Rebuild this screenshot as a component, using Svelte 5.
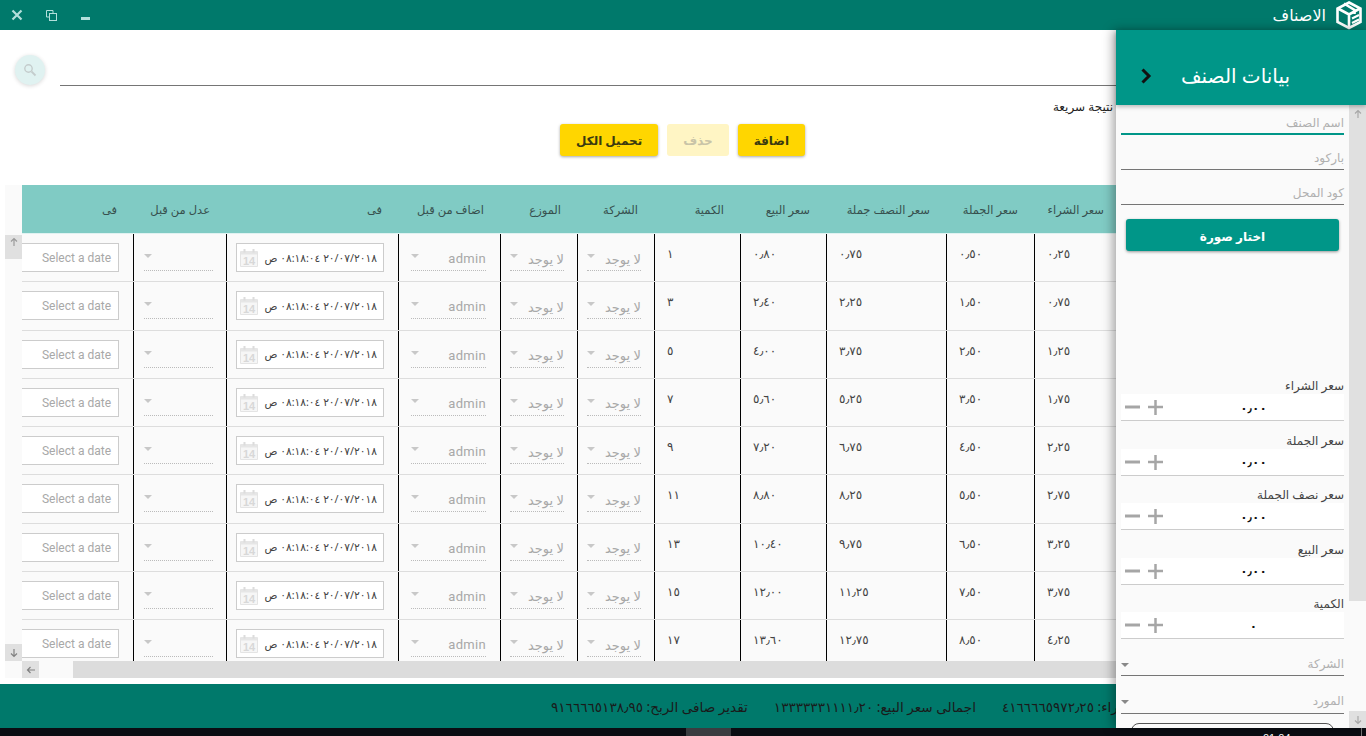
<script>
  const ar = (s) => String(s).replace(/\d/g, (d) => '٠١٢٣٤٥٦٧٨٩'[d]).replace('.', '٫');
  const headers = ['سعر الشراء', 'سعر الجملة', 'سعر النصف جملة', 'سعر البيع', 'الكمية', 'الشركة', 'الموزع', 'اضاف من قبل', 'فى', 'عدل من قبل', 'فى'];
  const rows = [1, 3, 5, 7, 9, 11, 13, 15, 17].map((q) => ({
    buy: ar((q * 0.25).toFixed(2)),
    whole: ar((q * 0.5).toFixed(2)),
    half: ar((q * 0.75).toFixed(2)),
    sell: ar((q * 0.8).toFixed(2)),
    qty: ar(q)
  }));
  const stamp = '٢٠/٠٧/٢٠١٨ ٠٨:١٨:٠٤ ص';
  const prices = ['سعر الشراء', 'سعر الجملة', 'سعر نصف الجملة', 'سعر البيع'];
</script>

<div class="app" dir="ltr">
  <header class="titlebar">
    <div class="winbtns">
      <svg class="w-close" width="12" height="12" viewBox="0 0 12 12"><path d="M1.5 1.5l9 9M10.5 1.5l-9 9" stroke="#b2dfdb" stroke-width="2.2" fill="none"/></svg>
      <svg class="w-restore" width="11" height="11" viewBox="0 0 11 11"><path d="M.5.5h6.5v2.5M.5.5v6.5h2.5" stroke="#b2dfdb" fill="none"/><rect x="3.5" y="3.5" width="7" height="7" stroke="#b2dfdb" fill="none"/></svg>
      <span class="w-min"></span>
    </div>
    <div class="brand" dir="rtl">
      <svg width="30" height="30" viewBox="0 0 30 30"><path d="M15 2.5L26.5 8.500V22L15 28L3.500 22V8.500Z" fill="none" stroke="#fff" stroke-width="2.600"/><path d="M4 8.500L15 14.500L26 8.500M15 14.500V27" fill="none" stroke="#fff" stroke-width="2.600"/><path d="M10 3.500L20.500 10L20.500 14" fill="none" stroke="#fff" stroke-width="2.600"/><path d="M18 18.500L25 15M18 23L25 19.500" stroke="#fff" stroke-width="2" fill="none"/></svg>
      <span>الاصناف</span>
    </div>
  </header>

  <div class="body">
    <main class="content">
      <section class="search">
        <div class="searchbtn">
          <svg width="14" height="14" viewBox="0 0 14 14"><circle cx="5.500" cy="5.500" r="3.700" fill="none" stroke="#c4cccc" stroke-width="1.400"/><path d="M8.500 8.500l4 4" stroke="#c4cccc" stroke-width="1.800"/></svg>
        </div>
        <div class="searchline"></div>
      </section>
      <div class="quick" dir="rtl">نتيجة سريعة</div>
      <div class="actions" dir="rtl">
        <button class="yl">اضافة</button>
        <button class="yl off">حذف</button>
        <button class="yl">تحميل الكل</button>
      </div>

      <section class="grid">
        <div class="gutter">
          <div class="gtop"></div>
          <div class="arrow up"><svg width="10" height="10" viewBox="0 0 10 10"><path d="M5 9V2M2 4.500L5 1.500l3 3" stroke="#9a9a9a" stroke-width="1.200" fill="none"/></svg></div>
          <div class="gmid"></div>
          <div class="arrow dn"><svg width="10" height="10" viewBox="0 0 10 10"><path d="M5 1v7M2 5.500L5 8.500l3-3" stroke="#808080" stroke-width="1.200" fill="none"/></svg></div>
          <div class="gcorner"></div>
        </div>
        <div class="gridmain">
          <div class="viewport" dir="rtl">
            <div class="row head">
              {#each headers as h}<div class="hc">{h}</div>{/each}
            </div>
            {#each rows as r}
              <div class="row">
                <div class="c num">{r.buy}</div>
                <div class="c num">{r.whole}</div>
                <div class="c num">{r.half}</div>
                <div class="c num">{r.sell}</div>
                <div class="c num">{r.qty}</div>
                <div class="c"><div class="sel s-co"><span>لا يوجد</span><i></i></div></div>
                <div class="c"><div class="sel s-di"><span>لا يوجد</span><i></i></div></div>
                <div class="c"><div class="sel s-ad"><span class="latin">admin</span><i></i></div></div>
                <div class="c"><div class="dt">
                  <span>{stamp}</span>
                  <svg width="18" height="19" viewBox="0 0 18 19"><path d="M.500 3.500h17v15h-17z" fill="#f6f6f6" stroke="#e4e4e4"/><path d="M1 3h16v3.500H1z" fill="#e6e6e6"/><path d="M4.500 1v3.500M13.500 1v3.500" stroke="#dcdcdc" stroke-width="2"/><text x="9" y="16.500" text-anchor="middle" class="cal">14</text></svg>
                </div></div>
                <div class="c"><div class="sel s-ed"><span></span><i></i></div></div>
                <div class="c"><div class="dt2">Select a date</div></div>
              </div>
            {/each}
          </div>
          <div class="hbar">
            <div class="arrow left"><svg width="10" height="10" viewBox="0 0 10 10"><path d="M9 5H2M4.500 2L1.500 5l3 3" stroke="#808080" stroke-width="1.200" fill="none"/></svg></div>
            <div class="hgap"></div>
            <div class="hthumb"></div>
          </div>
        </div>
      </section>

      <footer class="totals" dir="rtl">
        <span>اجمالى سعر الشراء: ٤١٦٦٦٦٥٩٧٢٫٢٥</span>
        <span>اجمالى سعر البيع: ١٣٣٣٣٣٣١١١١٫٢٠</span>
        <span>تقدير صافى الربح: ٩١٦٦٦٦٥١٣٨٫٩٥</span>
      </footer>
    </main>

    <aside class="drawer">
      <div class="dhead" dir="rtl">
        <h1>بيانات الصنف</h1>
        <svg width="12" height="16" viewBox="0 0 12 16"><path d="M2.500 1.500L9 8l-6.500 6.500" stroke="#111" stroke-width="3" fill="none"/></svg>
      </div>
      <div class="dbody">
        <div class="form" dir="rtl">
          <div class="field active">اسم الصنف</div>
          <div class="field">باركود</div>
          <div class="field">كود المحل</div>
          <button class="pick">اختار صورة</button>
          <div class="pics"></div>
          {#each prices as p}
            <div class="lab">{p}</div>
            <div class="stepper" dir="ltr">
              <svg width="38" height="16" viewBox="0 0 38 16"><path d="M0 8h15" stroke="#a6a6a6" stroke-width="3"/><path d="M23 8h15M30.500 1v15" stroke="#a6a6a6" stroke-width="2.500"/></svg>
              <span dir="rtl">٠٫٠٠</span>
            </div>
          {/each}
          <div class="lab">الكمية</div>
          <div class="stepper" dir="ltr">
            <svg width="38" height="16" viewBox="0 0 38 16"><path d="M0 8h15" stroke="#a6a6a6" stroke-width="3"/><path d="M23 8h15M30.500 1v15" stroke="#a6a6a6" stroke-width="2.500"/></svg>
            <span dir="rtl">٠</span>
          </div>
          <div class="dd first"><span>الشركة</span><i></i></div>
          <div class="dd"><span>المورد</span><i></i></div>
          <div class="outlined"></div>
        </div>
        <div class="vbar">
          <div class="arrow top"><svg width="10" height="10" viewBox="0 0 10 10"><path d="M5 9V2M2 4.500L5 1.500l3 3" stroke="#a8a8a8" stroke-width="1.200" fill="none"/></svg></div>
          <div class="vthumb"></div>
          <div class="vgap"></div>
          <div class="arrow"><svg width="10" height="10" viewBox="0 0 10 10"><path d="M5 1v7M2 5.500L5 8.500l3-3" stroke="#a8a8a8" stroke-width="1.200" fill="none"/></svg></div>
        </div>
      </div>
    </aside>
  </div>

  <div class="taskbar">
    <div class="tb-block"></div>
    <div class="tb-clock">01:04</div>
    <div class="tb-edge"></div>
  </div>
</div>

<style>
  :global(body) { margin: 0; background: #fff; }
  .app {
    width: 1366px; height: 736px; overflow: hidden;
    display: flex; flex-direction: column;
    font-family: "Noto Sans", "DejaVu Sans", sans-serif;
    font-size: 12px; color: #333;
  }
  .titlebar {
    height: 30px; flex: none; background: #00796b;
    display: flex; justify-content: space-between; align-items: center;
  }
  .winbtns { display: flex; align-items: center; padding-left: 11px; }
  .w-close { margin-right: 23px; }
  .w-restore { margin-right: 24px; }
  .w-min { width: 9px; height: 3px; background: #b2dfdb; margin-top: 7px; }
  .brand { display: flex; align-items: center; gap: 8px; padding-right: 2px; color: #fff; font-size: 16px; }

  .body { flex: 1; min-height: 0; display: flex; }
  .content { flex: none; width: 1116px; display: flex; flex-direction: column; background: #fff; }

  .search { height: 56px; flex: none; display: flex; align-items: flex-start; }
  .searchbtn {
    width: 30px; height: 30px; margin: 25px 0 0 15px; border-radius: 50%;
    background: #e0f2f1; box-shadow: 0 1px 4px rgba(0, 0, 0, .16);
    display: flex; align-items: center; justify-content: center;
  }
  .searchline { flex: 1; height: 1px; margin: 55px 0 0 15px; background: #757575; }
  .quick { height: 38px; flex: none; padding: 13px 3px 0 0; box-sizing: border-box; font-size: 12px; color: #222; line-height: 16px; }
  .actions { flex: none; height: 61px; display: flex; justify-content: center; gap: 9px; padding-left: 249px; box-sizing: border-box; }
  .yl {
    height: 32px; padding: 0 16px; border: 0; border-radius: 3px; background: #ffd600;
    font: 700 12px "Noto Sans", "DejaVu Sans", sans-serif; color: #3a3a10;
    box-shadow: 0 1px 3px rgba(0, 0, 0, .35);
  }
  .off { background: #fff5c4; color: #c9c4a8; box-shadow: none; }

  .grid { flex: none; height: 493px; margin-left: 5px; display: flex; }
  .gutter { width: 17px; flex: none; display: flex; flex-direction: column; background: #fafafa; }
  .gtop { height: 50px; flex: none; }
  .gmid { flex: 1; }
  .gcorner { height: 17px; flex: none; }
  .arrow { height: 17px; flex: none; background: #e0e0e0; display: flex; align-items: center; justify-content: center; }
  .arrow.up { height: 24px; align-items: flex-start; padding-top: 2px; box-sizing: border-box; }
  .gridmain { flex: 1; min-width: 0; display: flex; flex-direction: column; }
  .viewport { flex: 1; min-height: 0; overflow: hidden; background: #fafafa; }
  .row {
    display: grid; height: 48.25px; box-sizing: border-box; width: 1111px;
    grid-template-columns: 82px 88px 120px 86px 86px 77px 77px 102px 172px 93px 128px;
    border-bottom: 1px solid #ddd;
  }
  .row.head { height: 49px; background: #80cbc4; border-bottom: 1px solid #e0f2f1; }
  .hc { padding: 0 16px; line-height: 50px; font-size: 11.500px; color: #37504e; white-space: nowrap; }
  .hc:first-child { padding-inline-start: 12px; }
  .c { position: relative; border-inline-end: 1px solid #000; min-width: 0; }
  .num { padding: 12px 12px 0; text-align: left; font-size: 12px; line-height: 16px; color: #444; }
  .sel { display: flex; justify-content: space-between; align-items: center; height: 26px; box-sizing: border-box; padding-top: 2px; margin: 11px 0 0; border-bottom: 1px dotted #bbb; font-size: 13px; color: #a8a8a8; }
  .s-co, .s-di { margin-inline: 13px 9px; }
  .s-ad { margin-inline: 14px 12px; }
  .s-ed { margin-inline: 13px 10px; }
  .sel i, .dd i { width: 0; height: 0; border: 4px solid transparent; border-top: 4px solid #c8c8c8; border-bottom: 0; }
  .sel i { margin-top: -5px; }
  .latin { font-family: Roboto, sans-serif; font-size: 13px; letter-spacing: .3px; }
  .dt {
    display: flex; justify-content: space-between; align-items: center; height: 29px; box-sizing: border-box;
    margin: 9px 14px 0 9px; padding: 0 6px 0 3px; background: #fff; border: 1px solid #ccc; font-size: 10.700px; color: #444; white-space: nowrap;
  }
  .cal { font: 700 11px "Liberation Sans", sans-serif; fill: #d8d8d8; }
  .dt2 {
    height: 29px; box-sizing: border-box; margin: 9px 14px 0 0; padding: 0 7px; line-height: 28px;
    background: #fff; border: 1px solid #ccc; font-family: Roboto, sans-serif; font-size: 12px; color: #a8a8a8; text-align: right; direction: ltr;
  }
  .hbar { height: 17px; flex: none; display: flex; background: #fafafa; }
  .left { width: 17px; }
  .hgap { width: 34px; flex: none; }
  .hthumb { flex: 1; background: #dcdcdc; }

  .totals {
    margin-top: 6px; height: 44px; flex: none; background: #00796b;
    display: flex; justify-content: flex-end; align-items: center; gap: 26px;
    padding-inline-end: 551px; overflow: hidden; box-sizing: border-box; white-space: nowrap;
    font-size: 13.600px; color: #1a1a1a;
  }
  .totals span { flex: none; }

  .drawer { flex: none; width: 250px; display: flex; flex-direction: column; background: #fafafa; box-shadow: -3px 0 10px rgba(0, 0, 0, .35); z-index: 2; }
  .dhead { height: 75px; flex: none; background: #009688; display: flex; justify-content: space-between; align-items: center; padding: 16px 76px 0 0; box-sizing: border-box; box-shadow: 0 2px 4px rgba(0, 0, 0, .25); position: relative; color: #fff; }
  .dhead svg { margin-inline-start: auto; margin-left: 24px; }
  .dhead h1 { margin: 0; font-size: 20px; font-weight: 400; }
  .dbody { flex: 1; min-height: 0; display: flex; overflow: hidden; }
  .form { width: 233px; flex: none; box-sizing: border-box; padding: 0 5px; overflow: hidden; color: #444; }
  .field { height: 35px; box-sizing: border-box; border-bottom: 1px solid #757575; padding-top: 15px; font-size: 12px; line-height: 16px; color: #b0b0b0; }
  .field.active { height: 30px; padding-top: 10px; border-bottom: 2px solid #009688; }
  .pick { display: block; width: 213px; height: 32px; margin: 14px 5px 0; padding-top: 3px; border: 0; border-radius: 3px; background: #009688; color: #fff; font: 700 12px "Noto Sans", "DejaVu Sans", sans-serif; box-shadow: 0 1px 3px rgba(0, 0, 0, .4); }
  .pics { height: 127px; }
  .lab { height: 16px; line-height: 16px; font-size: 12px; color: #444; margin-top: 11.500px; }
  .pics + .lab { margin-top: 0; }
  .stepper { height: 27px; box-sizing: border-box; background: #fff; border-bottom: 1px solid #ccc; display: flex; align-items: center; padding-left: 4px; position: relative; }
  .stepper span { flex: 1; text-align: center; font-size: 12px; font-weight: 700; color: #111; }
  .dd { display: flex; justify-content: space-between; height: 38px; box-sizing: border-box; border-bottom: 1px solid #757575; padding-top: 17px; font-size: 12px; line-height: 16px; color: #b0b0b0; }
  .dd.first { height: 37px; }
  .dd i { border-top-color: #888; margin-top: 7px; }
  .outlined { height: 30px; margin: 9px 10px 0; border: 1px solid #555; border-radius: 8px 8px 0 0; }
  .vbar { width: 17px; flex: none; display: flex; flex-direction: column; background: #fafafa; }
  .vbar .top { background: #e0e0e0; }
  .vthumb { height: 479px; flex: none; background: #e0e0e0; }
  .vgap { flex: 1; }

  .taskbar { height: 8px; flex: none; background: #0a0c12; position: relative; overflow: hidden; display: flex; }
  .tb-block { position: absolute; left: 686px; width: 45px; height: 8px; background: #3a3c40; }
  .tb-clock { position: absolute; left: 1263px; top: 4px; font: 11px "Liberation Sans", sans-serif; color: #fff; }
  .tb-edge { position: absolute; left: 1361px; width: 1px; height: 8px; background: #777; }
</style>
